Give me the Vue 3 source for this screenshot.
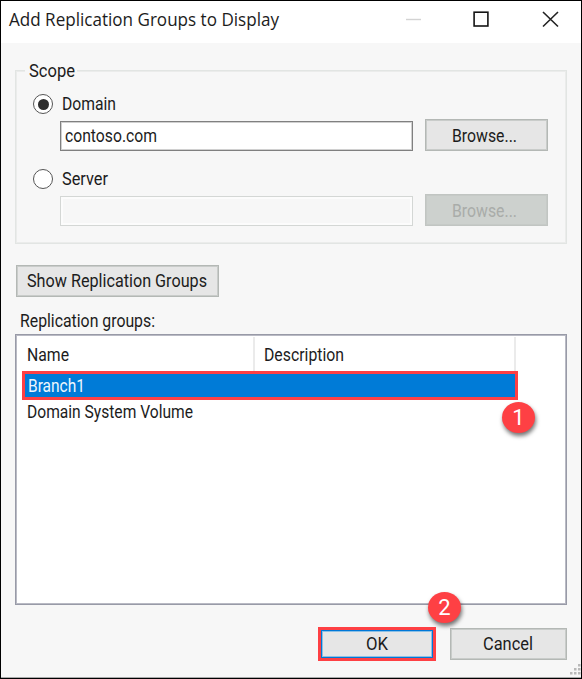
<script setup>
import { h, ref } from 'vue'

// One line of text, condensed to the width it has in the dialog font.
const Label = (props) =>
  h('svg', { class: 'label', width: props.w, height: 22 }, [
    h('text', { x: 0, y: 17.3, textLength: props.w, lengthAdjust: 'spacingAndGlyphs' }, props.text),
  ])
Label.props = ['text', 'w']

const scope = ref('domain')
const groups = [
  { name: 'Branch1', w: 57, selected: true },
  { name: 'Domain System Volume', w: 166, selected: false },
]
</script>

<template>
  <div class="window">
    <header class="titlebar">
      <Label class="title" text="Add Replication Groups to Display" :w="270" />
      <svg class="controls" width="155" height="20" viewBox="0 0 155 20">
        <path d="M0 10.5H15" stroke="#d3d3d3" stroke-width="1.4" />
        <rect x="68.1" y="3.2" width="13.8" height="13.8" fill="none" stroke="#151515" stroke-width="1.6" />
        <path d="M137 3L152 17.5M152 3L137 17.5" stroke="#222" stroke-width="1.6" />
      </svg>
    </header>

    <main class="body">
      <section class="group">
        <div class="legend"><Label text="Scope" :w="46" /></div>
        <div class="option" @click="scope = 'domain'">
          <span class="radio" :class="{ on: scope === 'domain' }"></span>
          <Label text="Domain" :w="54" />
        </div>
        <div class="line">
          <div class="field"><Label text="contoso.com" :w="92" /></div>
          <button class="btn browse"><Label text="Browse..." :w="65" /></button>
        </div>
        <div class="option server" @click="scope = 'server'">
          <span class="radio" :class="{ on: scope === 'server' }"></span>
          <Label text="Server" :w="46" />
        </div>
        <div class="line">
          <div class="field disabled"></div>
          <button class="btn browse disabled"><Label text="Browse..." :w="65" /></button>
        </div>
      </section>

      <button class="btn show"><Label text="Show Replication Groups" :w="180" /></button>
      <div class="caption"><Label text="Replication groups:" :w="135" /></div>

      <section class="list">
        <div class="head">
          <div class="col name"><Label text="Name" :w="42" /></div>
          <div class="col desc"><Label text="Description" :w="80" /></div>
        </div>
        <div v-for="g in groups" :key="g.name" class="row" :class="{ selected: g.selected }">
          <Label :text="g.name" :w="g.w" />
          <span v-if="g.selected" class="badge one">1</span>
        </div>
      </section>

      <footer class="actions">
        <div class="mark">
          <button class="btn ok"><Label text="OK" :w="22" /></button>
          <span class="badge two">2</span>
        </div>
        <button class="btn cancel"><Label text="Cancel" :w="50" /></button>
      </footer>
    </main>
    <svg class="grip" width="11" height="11" viewBox="0 0 11 11" fill="#b9b9b9">
      <path d="M8 0h2.5v2.5H8zM4 4h2.5v2.5H4zM8 4h2.5v2.5H8zM0 8h2.5v2.5H0zM4 8h2.5v2.5H4zM8 8h2.5v2.5H8z" />
    </svg>
  </div>
</template>

<style>
body { margin: 0; overflow: hidden; }
</style>

<style scoped>
* { box-sizing: border-box; }
.window {
  position: relative;
  width: 582px;
  height: 679px;
  border: 1px solid #000;
  background: #f7f7f7;
  box-shadow: inset 0 -1px #aaa;
  font-family: Roboto, "Liberation Sans", sans-serif;
  font-size: 17.5px;
  color: #1c1c1c;
}
.label { display: block; flex: none; overflow: visible; fill: currentColor; }
.titlebar {
  display: flex;
  justify-content: space-between;
  height: 42px;
  padding: 8px 20px 0 8px;
  background: #fff;
}
.title { font-family: "Open Sans", "Noto Sans", sans-serif; font-size: 17.5px; }
.controls { display: block; }
.body { padding: 27px 14px 0; }
.group {
  height: 174px;
  border: 1px solid #e2e5e3;
  box-shadow: inset 0 0 0 1px #ebeceb;
  padding: 1px 18px 0 17px;
}
.legend {
  width: 52px;
  height: 22px;
  margin: -12px 0 0 -8px;
  padding-left: 4px;
  background: #f7f7f7;
}
.option { display: flex; align-items: center; gap: 9px; height: 22px; margin-top: 11px; }
.radio {
  display: flex;
  width: 20px;
  height: 20px;
  border: 1.5px solid #555;
  border-radius: 50%;
  background: #fff;
  align-items: center;
  justify-content: center;
}
.radio.on::after { content: ""; width: 11px; height: 11px; border-radius: 50%; background: #2e2e2e; }
.line { display: flex; justify-content: space-between; height: 32px; margin: 4px 0 0 27px; }
.field {
  width: 353px;
  height: 30px;
  margin-top: 2px;
  padding: 3px 0 0 4px;
  border: 1px solid #808080;
  box-shadow: inset 0 0 0 1px #d0d0d0;
  background: #fff;
}
.field.disabled { border-color: #d4d7d5; background: #f7f7f7; box-shadow: inset 0 0 0 2px #fcfcfc; }
.server { margin-top: 17px; }
.btn {
  display: flex;
  justify-content: center;
  align-items: center;
  margin: 0;
  padding: 0;
  border: 1px solid #b4b8b5;
  box-shadow: inset 0 0 0 1px #c9ccca;
  background: #e6e6e6;
  color: inherit;
  font: inherit;
}
.browse { width: 123px; height: 32px; }
.line .browse .label { margin: 1px 4px 0 0; }
.btn.disabled { background: #cdd1ce; border-color: #c1c5c2; box-shadow: inset 0 0 0 1px #c6cac7; color: #a9aca9; }
.show { width: 203px; height: 32px; margin: 21px 0 0 1px; }
.show .label { margin-right: 1px; }
.caption { margin: 13px 0 0 5px; height: 22px; }
.list {
  height: 271px;
  margin-top: 2px;
  padding: 2px 1px 0 6px;
  border: 1px solid #989aa7;
  box-shadow: inset 0 0 0 1px #b9bac4;
  background: #fff;
}
.head { display: flex; height: 34px; }
.col { padding-top: 7px; border-right: 2px solid #ebebeb; }
.name { width: 233px; padding-left: 5px; }
.desc { width: 261px; padding-left: 9px; }
.row { position: relative; width: 496px; height: 24px; padding: 1px 0 0 5px; }
.row.selected {
  height: 29px;
  padding: 1px 0 0 3px;
  border: 3px solid #fe4044;
  background: #007bd7;
  color: #edf6fd;
}
.badge {
  position: absolute;
  display: flex;
  align-items: center;
  justify-content: center;
  width: 33px;
  height: 31px;
  border-radius: 50%;
  background: #fe4044;
  box-shadow: 1px 3px 4px rgba(0, 0, 0, 0.55);
  color: #fff;
  font-size: 22px;
  line-height: 31px;
}
.one { left: 477px; top: 28px; }
.actions { display: flex; gap: 14px; justify-content: flex-end; margin-top: 22px; }
.mark { position: relative; width: 118px; height: 34px; border: 3px solid #fe4044; }
.ok { width: 112px; height: 28px; border: 1px solid #0078d7; box-shadow: inset 0 0 0 1px #8cc0e6; }
.two { left: 107px; top: -38px; }
.cancel { width: 117px; height: 32px; margin-top: 1px; }
.cancel .label { margin-right: 2px; }
.grip { position: absolute; right: 0; bottom: 3px; }
</style>
